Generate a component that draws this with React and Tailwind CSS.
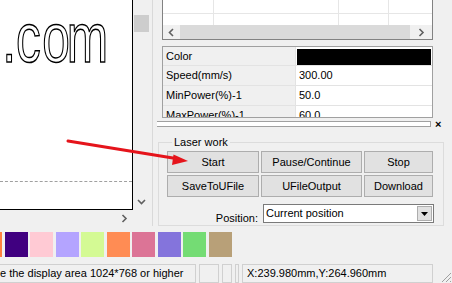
const ui = "font-['Liberation_Sans',Arial,sans-serif]";

function Chevron({ dir }) {
  if (dir === "down") {
    return (
      <svg width="9" height="6" viewBox="0 0 9 6">
        <path d="M1 1L4.5 4.5L8 1" fill="none" stroke="#606060" strokeWidth="1.6" />
      </svg>
    );
  }
  const d = dir === "left" ? "M5 1L1.5 4.5L5 8" : "M1.5 1L5 4.5L1.5 8";
  return (
    <svg width="7" height="9" viewBox="0 0 7 9">
      <path d={d} fill="none" stroke="#606060" strokeWidth="1.6" />
    </svg>
  );
}

function Btn({ children, w }) {
  return (
    <button className={`${w} h-[22px] bg-[#e1e1e1] border border-[#adadad] text-[11px] leading-none text-black`}>
      {children}
    </button>
  );
}

function LeftView() {
  return (
    <div className="w-[152px] flex flex-col">
      <div className="flex h-[210px]">
        <div className="relative w-[133px] bg-white border-r border-b border-black overflow-hidden">
          <svg width="132" height="80" className="block">
            <text
              x="3.4 23 60.4 95.3"
              y="62"
              transform="scale(0.7 1)"
              fontFamily="Liberation Sans, Arial, sans-serif"
              fontSize="71"
              fill="none"
              stroke="#000"
              strokeWidth="1.3"
              vectorEffect="non-scaling-stroke"
            >
              .com
            </text>
          </svg>
          <div className="mt-[101px] border-t border-dashed border-[#a0a0a0]" />
        </div>
        <div className="w-[17px] flex flex-col items-center">
          <div className="mt-[15px] w-[15px] h-[17px] bg-[#cdcdcd]" />
          <div className="flex-1" />
          <div className="mb-[5px]">
            <Chevron dir="down" />
          </div>
        </div>
      </div>
      <div className="h-[16px] flex items-center justify-end pr-[24px]">
        <Chevron dir="right" />
      </div>
    </div>
  );
}

function TopGrid() {
  const cols = ["w-[51px]", "w-[125px]", "w-[50px]", "flex-1"];
  return (
    <div className="w-[271px] h-[40px] border-x border-b border-[#828282] flex flex-col">
      {[0, 1].map((r) => (
        <div key={r} className={`flex bg-white ${r === 0 ? "h-[14px] border-b border-[#e6e6e6]" : "h-[11px]"}`}>
          {cols.map((c, i) => (
            <div key={i} className={`${c} ${i < 3 ? "border-r border-[#e6e6e6]" : ""}`} />
          ))}
        </div>
      ))}
      <div className="flex-1 flex items-stretch">
        <div className="w-[17px] flex items-center justify-center">
          <Chevron dir="left" />
        </div>
        <div className="w-[230px] bg-[#dadada]" />
        <div className="flex-1 flex items-center justify-center">
          <Chevron dir="right" />
        </div>
      </div>
    </div>
  );
}

function PropTable() {
  const rows = [
    ["Color", null],
    ["Speed(mm/s)", "300.00"],
    ["MinPower(%)-1", "50.0"],
    ["MaxPower(%)-1", "60.0"],
  ];
  return (
    <div className="mt-[6px] w-[271px] h-[72px] border border-[#a0a0a0] overflow-hidden">
      {rows.map(([label, value], i) => (
        <div key={label} className={`flex shrink-0 border-b border-[#e3e3e3] ${i === 0 ? "h-[19px]" : "h-[20px]"}`}>
          <div className="w-[133px] bg-[#f0f0f0] border-r border-[#e3e3e3] pl-[3px] flex items-center whitespace-nowrap">
            {label}
          </div>
          <div className="flex-1 bg-white flex items-center pl-[3px]">
            {value === null ? (
              <div className="ml-[-2px] mr-[1px] mt-[1px] h-[16px] flex-1 bg-black" />
            ) : (
              value
            )}
          </div>
        </div>
      ))}
    </div>
  );
}

function LaserWork() {
  return (
    <fieldset className="ml-[5px] mr-[8px] mt-[5px] h-[120px] border border-[#dcdcdc] pl-[8px] pr-[8px]">
      <legend className="ml-[5px] px-[2px] leading-[14px]">Laser work</legend>
      <div className="mt-[2px] flex gap-[2px]">
        <Btn w="w-[92px]">Start</Btn>
        <Btn w="w-[101px]">Pause/Continue</Btn>
        <Btn w="w-[69px]">Stop</Btn>
      </div>
      <div className="mt-[2px] flex gap-[2px]">
        <Btn w="w-[92px]">SaveToUFile</Btn>
        <Btn w="w-[101px]">UFileOutput</Btn>
        <Btn w="w-[69px]">Download</Btn>
      </div>
      <div className="mt-[7px] flex items-end">
        <span className="w-[91px] text-right leading-[11px] mb-[-1px] whitespace-nowrap">Position:</span>
        <div className="ml-[5px] w-[171px] h-[19px] bg-white border border-[#7a7a7a] flex items-center">
          <span className="flex-1 pl-[2px] leading-none">Current position</span>
          <div className="w-[15px] h-[15px] mr-[1px] bg-[#e1e1e1] border border-[#adadad] flex items-center justify-center">
            <svg width="7" height="4" viewBox="0 0 7 4">
              <path d="M0 0H7L3.5 4Z" fill="#000" />
            </svg>
          </div>
        </div>
      </div>
    </fieldset>
  );
}

function RightPanel() {
  return (
    <div className="w-[300px] border-l border-[#d9d9d9] flex flex-col overflow-hidden">
      <div className="pl-[9px]">
        <TopGrid />
        <PropTable />
      </div>
      <div className="h-[16px] flex items-center pl-[4px]">
        <div className="w-[274px] h-[6px] border-y border-r border-[#a0a0a0] bg-white" />
        <span className="ml-[4px] text-[11px] font-bold leading-none">×</span>
      </div>
      <LaserWork />
    </div>
  );
}

function Palette() {
  const colors = ["#ff8040", "#400080", "#ffcad4", "#b4a4ff", "#d4fa94", "#ff8c54", "#dc7496", "#8474dc", "#74dc74", "#b8a078"];
  return (
    <div className="h-[36px] flex items-start pt-[6px] gap-[2.5px] ml-[-21px]">
      {colors.map((c, i) => (
        <div key={i} className="w-[23px] h-[25px] shrink-0" style={{ backgroundColor: c }} />
      ))}
    </div>
  );
}

function StatusBar() {
  return (
    <div className="h-[21px] flex items-start pt-[2px] gap-[3px]">
      <div className="w-[196px] h-[19px] border border-[#d0d0d0] border-l-0 flex items-center overflow-hidden whitespace-nowrap">
        e the display area 1024*768 or higher
      </div>
      <div className="w-[20px] h-[19px] border border-[#d0d0d0]" />
      <div className="w-[10px] h-[19px] border border-[#d0d0d0]" />
      <div className="w-[4px] h-[19px] border border-[#d0d0d0]" />
      <div className="w-[191px] h-[19px] border border-[#d0d0d0] pl-[4px] flex items-center whitespace-nowrap">
        X:239.980mm,Y:264.960mm
      </div>
      <div className="flex-1 flex justify-end items-end h-[19px]">
        <svg width="12" height="12" viewBox="0 0 12 12">
          <path d="M11 2L2 11M11 6L6 11M11 10L10 11" stroke="#a0a0a0" strokeWidth="1" />
        </svg>
      </div>
    </div>
  );
}

function Arrow() {
  return (
    <svg className="absolute left-0 top-0 pointer-events-none" width="452" height="283">
      <line x1="68" y1="141" x2="176" y2="158.5" stroke="#e5141b" strokeWidth="3" strokeLinecap="round" />
      <path d="M188 161L173.5 154.5L172 165Z" fill="#e5141b" />
    </svg>
  );
}

export default function App() {
  return (
    <div className={`relative w-[452px] h-[283px] overflow-hidden bg-[#f0f0f0] text-[11px] text-black ${ui} flex flex-col`}>
      <div className="flex h-[226px]">
        <LeftView />
        <RightPanel />
      </div>
      <Palette />
      <StatusBar />
      <Arrow />
    </div>
  );
}
